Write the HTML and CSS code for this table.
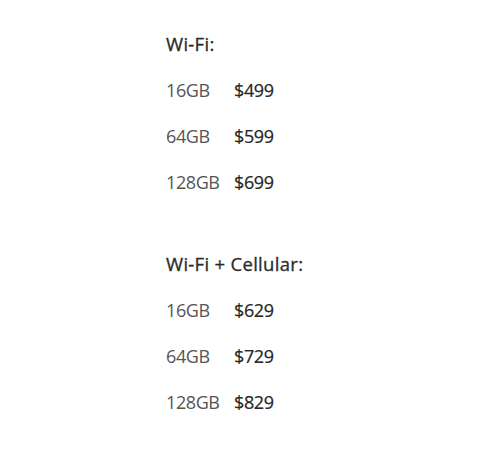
FILE: index.html
```html
<!DOCTYPE html>
<html lang="en">
<head>
<meta charset="utf-8">
<title>Pricing</title>
<link rel="stylesheet" href="styles.css">
</head>
<body>
<main class="pricing">
  <section class="group">
    <h2 class="group-title">Wi-Fi:</h2>
    <dl class="price-list">
      <dt class="size">16GB</dt><dd class="price">$499</dd>
      <dt class="size">64GB</dt><dd class="price">$599</dd>
      <dt class="size">128GB</dt><dd class="price">$699</dd>
    </dl>
  </section>
  <section class="group">
    <h2 class="group-title">Wi-Fi + Cellular:</h2>
    <dl class="price-list">
      <dt class="size">16GB</dt><dd class="price">$629</dd>
      <dt class="size">64GB</dt><dd class="price">$729</dd>
      <dt class="size">128GB</dt><dd class="price">$829</dd>
    </dl>
  </section>
</main>
</body>
</html>
```
FILE: styles.css
```css
html, body {
  margin: 0;
  background: #ffffff;
}
body {
  font-family: "Open Sans", "Noto Sans", sans-serif;
  color: #333333;
}
.pricing {
  display: flex;
  flex-direction: column;
  gap: 36px;
  padding: 21px 0 0 166px;
}
.group-title {
  margin: 0;
  font-size: 18.5px;
  font-weight: 400;
  line-height: 46px;
  color: #2a2a2a;
  letter-spacing: 0.3px;
  -webkit-text-stroke: 0.3px #2a2a2a;
}
.price-list {
  margin: 0;
  display: grid;
  grid-template-columns: 68px auto;
  font-size: 18px;
  line-height: 46px;
  letter-spacing: -0.4px;
}
.size {
  margin: 0;
  color: #555555;
  font-weight: 400;
}
.price {
  margin: 0;
  color: #262626;
  font-weight: 400;
  -webkit-text-stroke: 0.2px #262626;
}
```
